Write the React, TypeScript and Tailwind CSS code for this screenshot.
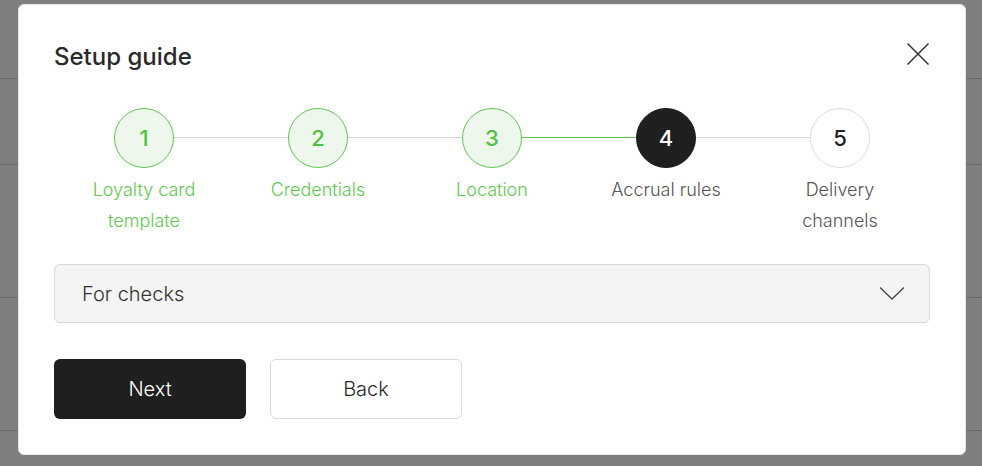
import React from "react";

const steps = [
  { n: 1, label: "Loyalty card template", state: "done" },
  { n: 2, label: "Credentials", state: "done" },
  { n: 3, label: "Location", state: "done" },
  { n: 4, label: "Accrual rules", state: "active" },
  { n: 5, label: "Delivery channels", state: "todo" },
];

export default function App() {
  return (
    <div
      className="relative w-[982px] h-[466px] overflow-hidden bg-[#7f7f7f]"
      style={{ fontFamily: "Inter, 'Noto Sans', sans-serif" }}
    >
      {/* backdrop rows */}
      <div className="flex flex-col">
        <div className="h-[79px] border-b border-[#6b6b6b]" />
        <div className="h-[86px] border-b border-[#6b6b6b]" />
        <div className="h-[133px] border-b border-[#6b6b6b]" />
        <div className="h-[133px] border-b border-[#6b6b6b]" />
      </div>

      {/* modal */}
      <div className="absolute left-[18px] top-[4px] w-[948px] h-[451px] bg-white rounded-[6px] border border-[#e6e6ea] px-[35px] pt-[37px]">
        <div className="flex items-start justify-between">
          <h2 className="text-[24px] leading-[30px] font-medium text-[#2a2a2a]">
            Setup guide
          </h2>
          <button className="w-[24px] h-[24px] flex items-center justify-center text-[#333]">
            <svg width="24" height="24" viewBox="0 0 24 24" fill="none">
              <path d="M1.5 1.5 L22.5 22.5 M22.5 1.5 L1.5 22.5" stroke="#333" strokeWidth="1.5" />
            </svg>
          </button>
        </div>

        {/* stepper */}
        <div className="relative mt-[36px] grid grid-cols-5 px-[3px]">
          {steps.map((s, i) => {
            const circle =
              s.state === "done"
                ? "bg-[#edf7eb] border-[#5ec94f] text-[#4fc23f]"
                : s.state === "active"
                ? "bg-[#1f1f1f] border-[#1f1f1f] text-white"
                : "bg-white border-[#dcdce2] text-[#1f1f1f]";
            const label =
              s.state === "done" ? "text-[#5ec94f]" : "text-[#555]";
            return (
              <div key={s.n} className="relative flex flex-col items-center">
                {i < steps.length - 1 && (
                  <div
                    className={`absolute top-[29px] left-1/2 w-full h-px ${
                      i === 2 ? "bg-[#5ec94f]" : "bg-[#d4d4da]"
                    }`}
                  />
                )}
                <div
                  className={`relative z-10 w-[60px] h-[60px] rounded-full border flex items-center justify-center text-[22px] font-medium ${circle}`}
                >
                  {s.n}
                </div>
                <div
                  className={`mt-[6px] w-[124px] text-center text-[18px] leading-[31px] font-light ${label}`}
                >
                  {s.label}
                </div>
              </div>
            );
          })}
        </div>

        {/* select */}
        <div className="mt-[28px] h-[59px] rounded-[6px] border border-[#d8d8e0] bg-[#f4f4f4] flex items-center justify-between pl-[27px] pr-[24px]">
          <span className="text-[20px] font-light text-[#333]">For checks</span>
          <svg width="26" height="15" viewBox="0 0 26 15" fill="none">
            <path d="M1 1.5 L13 13 L25 1.5" stroke="#444" strokeWidth="1.4" />
          </svg>
        </div>

        {/* buttons */}
        <div className="mt-[36px] flex gap-[24px]">
          <button className="w-[192px] h-[60px] rounded-[6px] bg-[#1f1f1f] text-white text-[20px] font-light">
            Next
          </button>
          <button className="w-[192px] h-[60px] rounded-[6px] border border-[#d8d8e0] bg-white text-[#2a2a2a] text-[20px] font-light">
            Back
          </button>
        </div>
      </div>
    </div>
  );
}
